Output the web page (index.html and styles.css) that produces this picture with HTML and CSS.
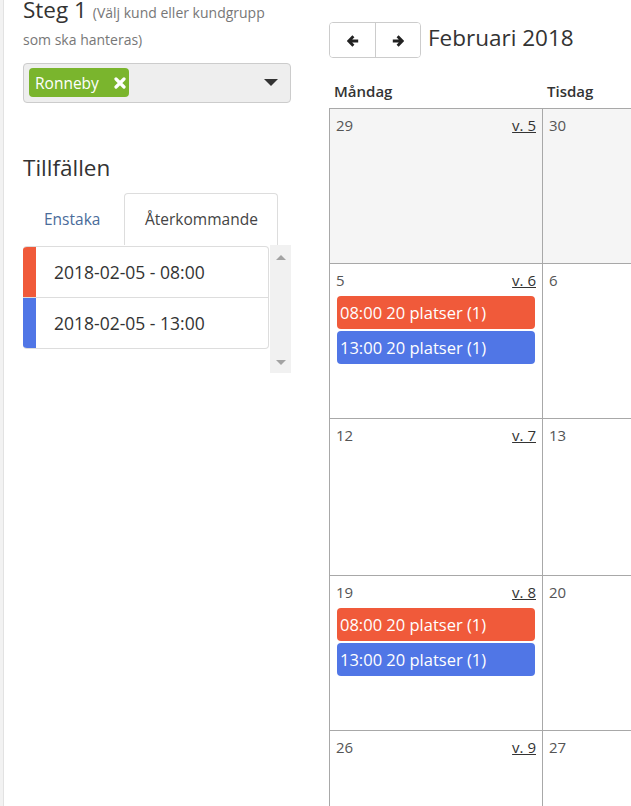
FILE: index.html
```html
<!DOCTYPE html>
<html lang="sv">
<head>
<meta charset="utf-8">
<title>Tillfällen</title>
<link rel="stylesheet" href="styles.css">
</head>
<body>
<div class="page">
  <aside class="left">
    <h3 class="step">Steg 1 <small>(Välj kund eller kundgrupp</small><small class="step-2">som ska hanteras)</small></h3>
    <div class="select">
      <span class="tag">Ronneby
        <svg class="tag-x" width="12" height="12" viewBox="0 0 12 12"><path d="M2 2L10 10M10 2L2 10" stroke="#fff" stroke-width="3.2" stroke-linecap="round"/></svg>
      </span>
      <span class="caret"></span>
    </div>
    <h3 class="occ-title">Tillfällen</h3>
    <ul class="tabs">
      <li class="tab tab-link">Enstaka</li>
      <li class="tab tab-active">Återkommande</li>
    </ul>
    <div class="listwrap">
      <ul class="list">
        <li class="item"><span class="bar bar-orange"></span><span class="item-text">2018-02-05 - 08:00</span></li>
        <li class="item"><span class="bar bar-blue"></span><span class="item-text">2018-02-05 - 13:00</span></li>
      </ul>
      <div class="scrollbar"><span class="sb-up"></span><span class="sb-down"></span></div>
    </div>
  </aside>

  <section class="cal">
    <div class="toolbar">
      <div class="btn-group">
        <button class="btn" type="button"><svg width="12" height="12" viewBox="0 0 12 12"><path d="M6.4 1.2L1.8 6L6.4 10.8M2.2 6H11.2" fill="none" stroke="#222" stroke-width="2.8"/></svg></button>
        <button class="btn" type="button"><svg width="12" height="12" viewBox="0 0 12 12"><path d="M5.6 1.2L10.2 6L5.6 10.8M9.8 6H0.8" fill="none" stroke="#222" stroke-width="2.8"/></svg></button>
      </div>
      <h2 class="month">Februari 2018</h2>
    </div>
    <div class="dow">
      <div class="dow-cell">Måndag</div>
      <div class="dow-cell">Tisdag</div>
      <div class="dow-cell">Onsdag</div>
      <div class="dow-cell">Torsdag</div>
      <div class="dow-cell">Fredag</div>
      <div class="dow-cell">Lördag</div>
      <div class="dow-cell">Söndag</div>
    </div>
    <div class="grid">
      <div class="cell other"><div class="cell-top"><span class="num">29</span><a class="wk">v. 5</a></div></div>
      <div class="cell other"><div class="cell-top"><span class="num">30</span></div></div>
      <div class="cell other"><div class="cell-top"><span class="num">31</span></div></div>
      <div class="cell"><div class="cell-top"><span class="num">1</span></div></div>
      <div class="cell"><div class="cell-top"><span class="num">2</span></div></div>
      <div class="cell"><div class="cell-top"><span class="num">3</span></div></div>
      <div class="cell"><div class="cell-top"><span class="num">4</span></div></div>

      <div class="cell"><div class="cell-top"><span class="num">5</span><a class="wk">v. 6</a></div>
        <div class="ev ev-orange">08:00 20 platser (1)</div>
        <div class="ev ev-blue">13:00 20 platser (1)</div>
      </div>
      <div class="cell"><div class="cell-top"><span class="num">6</span></div></div>
      <div class="cell"><div class="cell-top"><span class="num">7</span></div></div>
      <div class="cell"><div class="cell-top"><span class="num">8</span></div></div>
      <div class="cell"><div class="cell-top"><span class="num">9</span></div></div>
      <div class="cell"><div class="cell-top"><span class="num">10</span></div></div>
      <div class="cell"><div class="cell-top"><span class="num">11</span></div></div>

      <div class="cell"><div class="cell-top"><span class="num">12</span><a class="wk">v. 7</a></div></div>
      <div class="cell"><div class="cell-top"><span class="num">13</span></div></div>
      <div class="cell"><div class="cell-top"><span class="num">14</span></div></div>
      <div class="cell"><div class="cell-top"><span class="num">15</span></div></div>
      <div class="cell"><div class="cell-top"><span class="num">16</span></div></div>
      <div class="cell"><div class="cell-top"><span class="num">17</span></div></div>
      <div class="cell"><div class="cell-top"><span class="num">18</span></div></div>

      <div class="cell"><div class="cell-top"><span class="num">19</span><a class="wk">v. 8</a></div>
        <div class="ev ev-orange">08:00 20 platser (1)</div>
        <div class="ev ev-blue">13:00 20 platser (1)</div>
      </div>
      <div class="cell"><div class="cell-top"><span class="num">20</span></div></div>
      <div class="cell"><div class="cell-top"><span class="num">21</span></div></div>
      <div class="cell"><div class="cell-top"><span class="num">22</span></div></div>
      <div class="cell"><div class="cell-top"><span class="num">23</span></div></div>
      <div class="cell"><div class="cell-top"><span class="num">24</span></div></div>
      <div class="cell"><div class="cell-top"><span class="num">25</span></div></div>

      <div class="cell"><div class="cell-top"><span class="num">26</span><a class="wk">v. 9</a></div></div>
      <div class="cell"><div class="cell-top"><span class="num">27</span></div></div>
      <div class="cell"><div class="cell-top"><span class="num">28</span></div></div>
      <div class="cell other"><div class="cell-top"><span class="num">1</span></div></div>
      <div class="cell other"><div class="cell-top"><span class="num">2</span></div></div>
      <div class="cell other"><div class="cell-top"><span class="num">3</span></div></div>
      <div class="cell other"><div class="cell-top"><span class="num">4</span></div></div>
    </div>
  </section>
</div>
</body>
</html>
```

FILE: styles.css
```css
* { box-sizing: border-box; }

html, body {
  margin: 0;
  padding: 0;
  height: 100%;
  overflow: hidden;
  background: #fff;
}

body {
  font-family: "Open Sans", "Noto Sans", sans-serif;
  color: #333;
}

.page {
  display: flex;
  height: 806px;
  border-left: 3px solid #f2f2f2;
}

/* ---------- left column ---------- */
.left {
  flex: none;
  width: 288px;
  padding-left: 19px;
  border-left: 1px solid #e2e2e2;
}

.step {
  margin: 0;
  font-size: 22.5px;
  font-weight: 400;
  line-height: 20px;
  color: #333;
}

.step small {
  font-size: 14px;
  line-height: 14px;
  color: #777;
}

.step .step-2 {
  display: block;
  margin-top: 7px;
  line-height: 26px;
}

.select {
  margin-top: 10px;
  height: 40px;
  display: flex;
  align-items: center;
  justify-content: space-between;
  padding: 0 12px 0 5px;
  background: #eeeeee;
  border: 1px solid #cccccc;
  border-radius: 4px;
}

.tag {
  width: 100px;
  height: 29px;
  margin-top: -1px;
  display: flex;
  align-items: center;
  justify-content: space-between;
  padding: 0 3px 0 6px;
  background: #7ab52d;
  color: #fff;
  border-radius: 4px;
  font-size: 15.5px;
}

.tag-x { display: block; }

.caret {
  width: 0;
  height: 0;
  border-left: 7px solid transparent;
  border-right: 7px solid transparent;
  border-top: 7px solid #333;
  margin-top: -2px;
}

.occ-title {
  margin: 50px 0 10px;
  font-size: 22.5px;
  font-weight: 400;
  line-height: 30px;
  color: #333;
}

.tabs {
  display: flex;
  margin: 0;
  padding: 0;
  list-style: none;
}

.tab {
  padding: 14px 0 15px 20px;
  font-size: 15.5px;
  line-height: 22px;
  border: 1px solid transparent;
  border-bottom: 0;
  border-radius: 4px 4px 0 0;
}

.tab-link {
  width: 99px;
  margin-right: 2px;
  color: #4a6c9a;
}

.tab-active {
  width: 154px;
  color: #444;
  border-color: #dddddd;
  background: #fff;
}

.listwrap {
  display: flex;
  align-items: flex-start;
  height: 128px;
}

.list {
  width: 247px;
  margin: 1px 0 0;
  padding: 0;
  list-style: none;
  border: 1px solid #dddddd;
  border-left: 0;
  border-radius: 4px;
  overflow: hidden;
}

.item {
  display: flex;
  align-items: center;
  height: 50px;
}

.item + .item {
  border-top: 1px solid #dddddd;
  height: 51px;
}

.bar {
  align-self: stretch;
  width: 13px;
  flex: none;
}

.bar-orange { background: #f05a3a; }
.bar-blue { background: #5076e6; }

.item-text {
  padding-left: 18px;
  font-size: 17.5px;
  line-height: 22px;
  color: #333;
}

.scrollbar {
  width: 21px;
  height: 128px;
  margin-left: 1px;
  display: flex;
  flex-direction: column;
  align-items: center;
  justify-content: space-between;
  padding: 10px 0 8px;
  background: #f1f1f1;
}

.sb-up, .sb-down {
  width: 0;
  height: 0;
  border-left: 5px solid transparent;
  border-right: 5px solid transparent;
}

.sb-up { border-bottom: 5px solid #a3a3a3; }
.sb-down { border-top: 5px solid #a3a3a3; }

/* ---------- calendar ---------- */
.cal {
  flex: none;
  margin-left: 38px;
}

.toolbar {
  display: flex;
  margin-top: 22px;
  height: 36px;
}

.btn-group {
  display: flex;
  border: 1px solid #cccccc;
  border-radius: 4px;
  overflow: hidden;
}

.btn {
  width: 45px;
  height: 34px;
  padding: 0;
  margin: 0;
  border: 0;
  background: #fff;
  display: flex;
  align-items: center;
  justify-content: center;
}

.btn + .btn {
  border-left: 1px solid #cccccc;
}

.btn svg { display: block; margin-top: 2px; }

.month {
  align-self: flex-start;
  margin: 0 0 0 7px;
  font-size: 22.5px;
  font-weight: 400;
  line-height: 32px;
  color: #333;
}

.dow {
  display: grid;
  grid-template-columns: repeat(7, 213px);
  height: 50px;
  align-items: end;
  padding: 0 0 7px 1px;
}

.dow-cell {
  padding-left: 4px;
  font-size: 15px;
  font-weight: 600;
  line-height: 20px;
  color: #333;
}

.grid {
  display: grid;
  grid-template-columns: repeat(7, 213px);
  grid-template-rows: 155px 155px 157px 155px 155px;
  border-left: 1px solid #a8a8a8;
  border-top: 1px solid #a8a8a8;
}

.cell {
  padding: 6px 6px 0;
  border-right: 1px solid #a8a8a8;
  border-bottom: 1px solid #a8a8a8;
  background: #fff;
}

.cell.other { background: #f5f5f5; }

.cell-top {
  display: flex;
  justify-content: space-between;
  font-size: 15px;
  line-height: 21px;
}

.num { color: #555; }

.wk {
  color: #333;
  text-decoration: underline;
}

.ev {
  margin: 0 1px;
  height: 33px;
  padding: 5px 0 0 3px;
  font-size: 16.5px;
  line-height: 23px;
  color: #fff;
  border-radius: 4px;
  white-space: nowrap;
}

.cell-top + .ev { margin-top: 5px; }
.ev + .ev { margin-top: 2px; }

.ev-orange { background: #f05a3a; }
.ev-blue { background: #5076e6; }
```
